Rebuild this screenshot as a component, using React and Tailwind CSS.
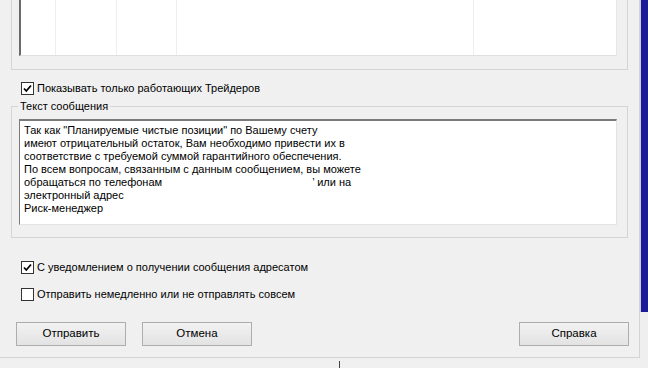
import React from "react";

const Check = ({ checked }) => (
  <span className="w-[13px] h-[13px] border border-[#333333] bg-white flex items-center justify-center shrink-0">
    {checked && (
      <svg width="9" height="9" viewBox="0 0 9 9">
        <path d="M1 4.5 L3.3 7 L8 1.5" fill="none" stroke="#000" strokeWidth="1.8" />
      </svg>
    )}
  </span>
);

const CheckRow = ({ checked, label, className }) => (
  <div className={"flex items-center gap-[3px] ml-[21px] h-[13px] " + className}>
    <Check checked={checked} />
    <span className="text-[11px] leading-[13px] text-black">{label}</span>
  </div>
);

const Button = ({ children, className }) => (
  <button
    className={
      "w-[110px] h-[24px] border border-[#adadad] bg-gradient-to-b from-[#f2f2f2] to-[#e3e3e3] text-[11.5px] text-black flex items-center justify-center " +
      className
    }
  >
    {children}
  </button>
);

const messageLines = [
  'Так как "Планируемые чистые позиции" по Вашему счету',
  "имеют отрицательный остаток, Вам необходимо привести их в",
  "соответствие с требуемой суммой гарантийного обеспечения.",
  "По всем вопросам, связанным с данным сообщением, вы можете",
];

export default function App() {
  return (
    <div
      className="w-[648px] h-[368px] bg-[#f0f0f0] flex overflow-hidden relative"
      style={{ fontFamily: '"Liberation Sans", Arial, sans-serif' }}
    >
      <div className="w-[640px] h-[358px] flex flex-col border-r border-b border-[#d4d4d4] shrink-0">
        {/* traders list group */}
        <div className="ml-[11px] w-[617px] h-[70px] border border-t-0 border-[#d5d5d5] shrink-0">
          <div className="ml-[7px] w-[598px] h-[56px] bg-white border-l-2 border-l-[#6a6a6a] border-b border-b-[#e0e0e0] border-r border-r-[#e6e6e6] flex">
            <div className="w-[35px] border-r border-[#eeeeee]"></div>
            <div className="w-[61px] border-r border-[#eeeeee]"></div>
            <div className="w-[60px] border-r border-[#eeeeee]"></div>
            <div className="w-[297px] border-r border-[#eeeeee]"></div>
            <div className="flex-1"></div>
          </div>
        </div>

        <CheckRow checked label="Показывать только работающих Трейдеров" className="mt-[12px]" />

        {/* message group */}
        <div className="ml-[11px] mt-[11px] w-[617px] h-[132px] border border-[#d5d5d5] relative shrink-0">
          <span className="absolute -top-[8px] left-[6px] bg-[#f0f0f0] px-[2px] text-[11px] leading-[14px] text-black">
            Текст сообщения
          </span>
          <div className="ml-[7px] mt-[12px] w-[598px] h-[106px] bg-white border-t-2 border-l border-[#7a7a7a] border-r border-r-[#e3e3e3] border-b border-b-[#e3e3e3] px-[4px] pt-[3px] text-[11px] leading-[13px] text-black">
            {messageLines.map((l, i) => (
              <div key={i} className="whitespace-nowrap">{l}</div>
            ))}
            <div className="whitespace-nowrap flex">
              <span>обращаться по телефонам</span>
              <span className="w-[150px]"></span>
              <span>’ или на</span>
            </div>
            <div className="whitespace-nowrap">электронный адрес</div>
            <div className="whitespace-nowrap">Риск-менеджер</div>
          </div>
        </div>

        <CheckRow checked label="С уведомлением о получении сообщения адресатом" className="mt-[23px]" />
        <CheckRow label="Отправить немедленно или не отправлять совсем" className="mt-[14px]" />

        <div className="flex mt-[21px] pl-[16px]">
          <Button>Отправить</Button>
          <Button className="ml-[16px]">Отмена</Button>
          <Button className="ml-auto mr-[10px]">Справка</Button>
        </div>
      </div>

      <div className="flex flex-col w-[8px]">
        <div className="h-[312px] bg-[#1c1c96] border-l border-[#c9c9e6]"></div>
        <div className="flex-1 bg-[#efefef]"></div>
      </div>

      <span className="absolute left-[339px] top-[361px] w-[1px] h-[7px] bg-[#444444]"></span>
    </div>
  );
}
